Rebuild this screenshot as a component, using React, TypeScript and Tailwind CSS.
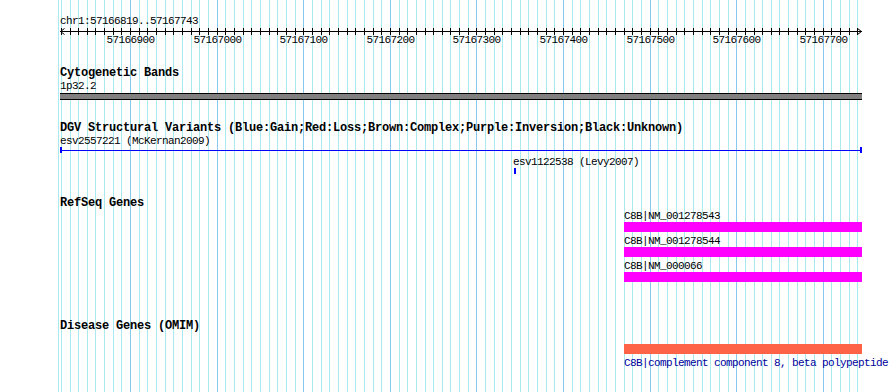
const START = 57166819;
const END = 57167743;
const LEFT = 60;
const RIGHT = 862;
const SCALE = 0.8658;

const px = (bp: number) => LEFT + (bp - START) * SCALE;

const GRID = Array.from({ length: 93 }, (_, i) => 57166820 + i * 10);
const MAJOR = [57166900, 57167000, 57167100, 57167200, 57167300, 57167400, 57167500, 57167600, 57167700];

const GENES = ['C8B|NM_001278543', 'C8B|NM_001278544', 'C8B|NM_000066'];

function Grid() {
  return (
    <svg className="absolute inset-0 pointer-events-none" width={890} height={392} shapeRendering="crispEdges">
      <line x1={58.5} y1={0} x2={58.5} y2={392} stroke="#a8eaf0" />
      {GRID.filter(bp => bp <= END).map(bp => {
        const x = Math.round(px(bp)) + 0.5;
        const major = bp % 100 === 0;
        return <line key={bp} x1={x} y1={0} x2={x} y2={392} stroke={major ? '#86c8ee' : '#a8eaf0'} />;
      })}
    </svg>
  );
}

function Ruler() {
  return (
    <svg width={890} height={8} className="block" shapeRendering="crispEdges">
      <rect x={LEFT} y={4} width={RIGHT - LEFT} height={1} fill="#000" />
      {GRID.filter(bp => bp <= END).map(bp => {
        const x = Math.round(px(bp));
        return <rect key={bp} x={x} y={1} width={1} height={7} fill="#000" />;
      })}
      <g stroke="#000" fill="none" shapeRendering="auto">
        <path d="M64.5 1.5 L60.5 4.5 L64.5 7.5" />
        <path d="M857.5 1.5 L861.5 4.5 L857.5 7.5" />
      </g>
    </svg>
  );
}

const small = 'text-[11px] leading-[11px] tracking-[-0.6px] whitespace-nowrap';
const title = 'text-[12px] leading-[11px] font-bold tracking-[-0.2px] whitespace-nowrap pl-[60px]';

export default function App() {
  return (
    <div className="relative w-[890px] h-[392px] overflow-hidden bg-white text-black font-['Liberation_Mono','DejaVu_Sans_Mono',monospace]">
      <Grid />
      <div className="relative">
        {/* Ruler */}
        <div className={`${small} pt-[16px] pl-[60px]`}>chr1:57166819..57167743</div>
        <Ruler />
        <div className="relative h-[11px]">
          {MAJOR.map(bp => (
            <span
              key={bp}
              className={`${small} absolute top-0 -translate-x-1/2`}
              style={{ left: Math.round(px(bp)) + 0.5 }}
            >
              {bp}
            </span>
          ))}
        </div>

        {/* Cytogenetic Bands */}
        <div className={`${title} mt-[22px]`}>Cytogenetic Bands</div>
        <div className={`${small} mt-[2px] pl-[60px]`}>1p32.2</div>
        <div className="mt-[1px] ml-[60px] w-[802px] h-[7px] border-y border-black bg-[#808080]" />

        {/* DGV */}
        <div className={`${title} mt-[23px]`}>
          DGV Structural Variants (Blue:Gain;Red:Loss;Brown:Complex;Purple:Inversion;Black:Unknown)
        </div>
        <div className={`${small} mt-[2px] pl-[60px]`}>esv2557221 (McKernan2009)</div>
        <div className="flex items-center ml-[60px] w-[802px] h-[6px]">
          <div className="w-[2px] h-[6px] bg-[#0000ff]" />
          <div className="flex-1 h-[1px] bg-[#0000ff]" />
          <div className="w-[2px] h-[6px] bg-[#0000ff]" />
        </div>
        <div className={`${small} mt-[4px] pl-[513px]`}>esv1122538 (Levy2007)</div>
        <div className="ml-[514px] w-[2px] h-[6px] bg-[#0000ff]" />

        {/* RefSeq */}
        <div className={`${title} mt-[24px]`}>RefSeq Genes</div>
        <div className="mt-[2px] flex flex-col gap-[4px]">
          {GENES.map(g => (
            <div key={g}>
              <div className={`${small} pl-[624px]`}>{g}</div>
              <div className="ml-[624px] w-[238px] h-[10px] bg-[#ff00ff]" />
            </div>
          ))}
        </div>

        {/* OMIM */}
        <div className={`${title} mt-[39px]`}>Disease Genes (OMIM)</div>
        <div className="mt-[12px] ml-[624px] w-[238px] h-[10px] bg-[#ff6347]" />
        <div className={`${small} mt-[4px] pl-[624px] text-[#00009c]`}>
          C8B|complement component 8, beta polypeptide
        </div>
      </div>
    </div>
  );
}
